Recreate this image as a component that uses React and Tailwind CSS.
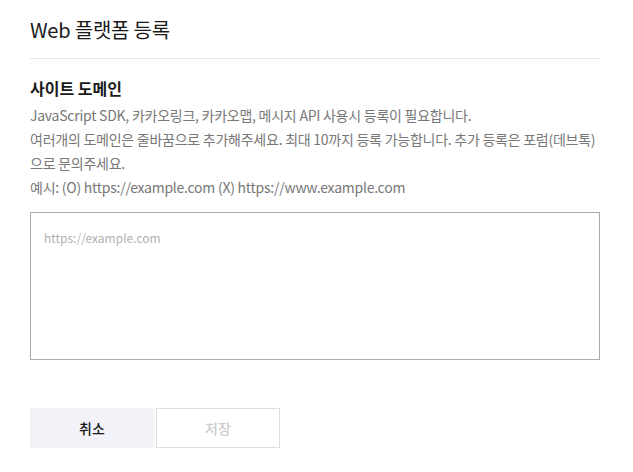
export default function App() {
  return (
    <div className="w-[633px] h-[472px] bg-white px-[30px] pt-[14px]" style={{ fontFamily: '"Noto Sans CJK KR", "Noto Sans", sans-serif' }}>
      <h1 className="text-[20px] leading-[32px] text-[#1a1a1a] font-normal tracking-[-0.2px]">Web 플랫폼 등록</h1>
      <div className="w-[570px] h-px bg-[#e5e5e5] mt-[12px]"></div>
      <h2 className="mt-[17px] text-[16px] leading-[24px] font-bold text-[#1a1a1a]">사이트 도메인</h2>
      <div className="mt-[3px] w-[570px] text-[14px] leading-[24px] text-[#777] tracking-[-0.25px]">
        <p>JavaScript SDK, 카카오링크, 카카오맵, 메시지 API 사용시 등록이 필요합니다.</p>
        <p>여러개의 도메인은 줄바꿈으로 추가해주세요. 최대 10까지 등록 가능합니다. 추가 등록은 포럼(데브톡)으로 문의주세요.</p>
        <p>예시: (O) https://example.com (X) https://www.example.com</p>
      </div>
      <textarea
        className="block mt-[13px] w-[570px] h-[148px] border border-[#aaa] px-[13px] py-[15px] text-[12px] leading-[20px] text-[#333] placeholder:text-[#b5b0ae] resize-none outline-none"
        placeholder="https://example.com"
      ></textarea>
      <div className="mt-[48px] flex gap-[2px]">
        <button className="w-[124px] h-[40px] bg-[#f1f3f8] text-[14px] text-[#1a1a1a] font-medium">취소</button>
        <button className="w-[124px] h-[40px] border border-[#ddd] bg-white text-[14px] text-[#ccc] font-medium">저장</button>
      </div>
    </div>
  );
}
